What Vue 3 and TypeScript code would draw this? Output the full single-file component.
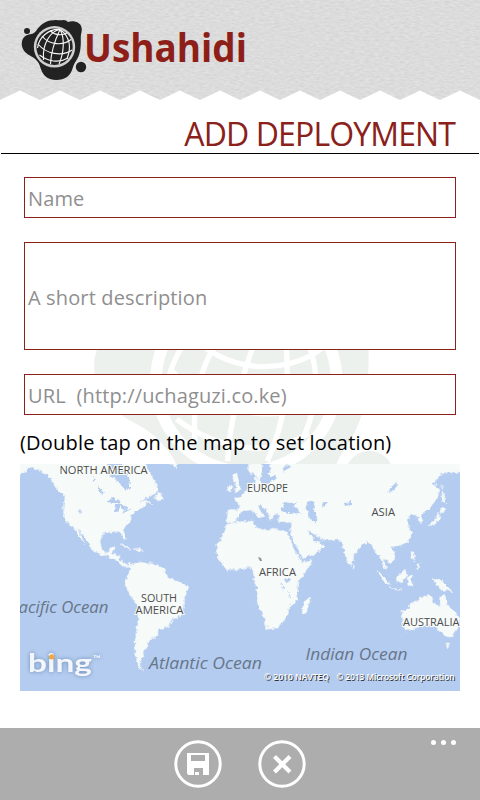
<script setup lang="ts">
import { ref } from 'vue'

interface MapLabel {
  text: string
  x: number
  y: number
  width: number
  kind: 'land' | 'sea'
}

const name = ref('')
const description = ref('')
const url = ref('')

const labels: MapLabel[] = [
  { text: 'NORTH AMERICA', x: 59.5, y: 474, width: 88, kind: 'land' },
  { text: 'EUROPE', x: 247, y: 492, width: 41, kind: 'land' },
  { text: 'ASIA', x: 371.5, y: 516, width: 23.5, kind: 'land' },
  { text: 'AFRICA', x: 259, y: 576, width: 37, kind: 'land' },
  { text: 'SOUTH', x: 141, y: 602, width: 36, kind: 'land' },
  { text: 'AMERICA', x: 135.5, y: 614, width: 48, kind: 'land' },
  { text: 'AUSTRALIA', x: 403, y: 626, width: 56.5, kind: 'land' },
  { text: 'Pacific Ocean', x: 9, y: 613, width: 99.5, kind: 'sea' },
  { text: 'Atlantic Ocean', x: 149, y: 669, width: 113, kind: 'sea' },
  { text: 'Indian Ocean', x: 305.5, y: 660, width: 102, kind: 'sea' },
]

const land: string[] = [
  // North and Central America
  'M18 462V476L24 472L30 467L37 469L45 473L50 478L54 484L58 491L65 497L63.500 507V516L69.500 525L75 529L80 538L85 544L77 528L83 535L90 545L92 551L102 554.500L111 557.500L117 561L122 566L128 567.500L132 564L126 564L120 560V555.500L112 554L116 546.500L111 548L107 553L102 550L100 541L104 533L115 531.500L121 532L124 540L126.500 538L123 530L128 523L132 515L137 510L144 507L147 502L153 505L148 500L140 503L146 498L153 494L159 490L157 485L152 477L147 467L146 462Z',
  // South America
  'M128 566.500L135 563L140 562L153 564L163 568L167 575L168 578L180 582L189 587L185 597L183 609L182 615L172 620L168 627L158 630L158 636L148 641V647L143 652L144 657L140 661L140 667L145 671L138 667L135 653V640L138 620V607L132 598L125 585L128 575L130 569Z',
  // Europe, Asia and the Middle East
  'M271 462L270 472L265 478L255 478L254 486L247 490L239 498L234 499L240 506L238 510L228 509L227 522L232 523L237 520L241 512L250 510L255 512L260 518L264 516L258 507L260 504L268 513L271 521L273 515L280 514L277 521L285 523L292 522L290 531L294 541L302 559L317 553L325 545L315 541L308 532L311 531L320 539L332 540L340 540L343 547L346 558L350 566L353 562L354 555L361 547L367 542L372 544L375 552L380 556L383 566L387 570L383 558L390 563L395 560L394 553L390 547L398 546L408 542L412 533L409 527L407 520L409 515L417 515L421 524L423 520L421 515L430 508L438 497L439 488L433 484L442 474L458 472H462V462Z',
  // Scandinavia
  'M248 462L249 473L255 474L259 481L263 473L261 462Z',
  // Africa
  'M227 524L242 521.500L254 521L255 527L268 531L272 528L282 530L287 532L295 552L302 562L312 560L310 566L303 575L298 582L297 600L289 607L288 616L278 628L267 629.500L264 618L257 602L258 592L254 580L253 570L249 567L237 570L227 570.500L217 556L216.500 546L223 535Z',
  // Australia
  'M402 611L408 609L411 603L418 601L421 597L430 595L434 603L440 606L441 596L444 594L448 605L456 612L460 619L458 628L452 637L446 637L440 631L436 627L427 625L416 628L406 631L403 625Z',
  // Islands
  'M233 475L237 472L238 480L241 489L235 493L236 486Z',
  'M228 487L232 485L231 491L227 491Z',
  'M303 605L309 597L310 601L306 613L302 614Z',
  'M442 484L444 496L446 504L442 500ZM441 508L446 509L441 513ZM439 513L440 520L434 525L427 526L434 521Z',
  'M376 569L386 579L391 587L384 582ZM391 588L402 590L395 590Z',
  'M396 578L405 569L407 575L402 583L397 581Z',
  'M407 577L413 575L411 580L413 585L408 586Z',
  'M433 579L442 581L449 588L453 592L443 590L436 585Z',
  'M411 552L414 552L415 561L411 558ZM416 565L420 563L419 569Z',
  'M445 643L450 643L448 648Z',
  'M353 564L355.500 568L353 569Z',
  'M119 544L126 546L131 549L124 547ZM133 549L143 550L138 552Z',
  'M154 499L159 491L164 499L160 501Z',
  'M170 463L178 463L176 468Z',
]

const water: string[] = [
  // Hudson Bay and inland lakes
  'M108 463L110 475L117 480L122 486L126 491L130 487L129 477L124 464L118 463Z',
  'M107 502L112 498L119 500L122 503L114 503Z',
  'M116 504L120 505L118 513L115 511ZM121 504L127 507L125 511L121 508Z',
  'M122 512L132 507L126 513Z',
  'M98 485L104 493L102 495L98 490ZM93 475L95 480L93 482Z',
  'M79 510L81 511L80 515Z',
  // Black Sea, Caspian Sea and Aral Sea
  'M281 511L284 502L291 503L297 502L294 506L300 513L291 514Z',
  'M307 503L313 501L316 506L313 509L317 515L316 522L310 520L309 513L306 507Z',
  'M322 504L326 501L328 503L323 508Z',
  // Baltic and White Sea
  'M263 466L267 464L268 474L272 477L276 475L275 480L264 484L260 480Z',
  'M282 468L289 465L291 467L284 471Z',
  // Central Asian lakes
  'M387 491L393 486L396 481L397 486L391 493Z',
  'M344 503L352 502L352 504.500L345 506Z',
  // African lakes
  'M285 579L289 577L290 581L286 583ZM281 582L284 588L283 590ZM288 591L291 598L289 598Z',
]
</script>

<template>
  <main class="page">
    <svg class="defs" width="0" height="0" aria-hidden="true">
      <symbol id="globe-mark" viewBox="20 18 68 64" overflow="visible">
        <path
          class="ink"
          d="M36 31C41 23 48 20 56 20Q60 20.500 62 20.200Q66 19.500 68 22C73 20 82 22 81.800 29.500C81.700 33 80.500 35 80.800 39C81 49 80 55 76 61C72 66 73 73 67 77C61 81 50 81 45 76C40 71 41 65 37 61C33 56 29 56 25 52C20.500 47 20.500 39 26 35.500C30 33.500 33 35 36 31Z"
        />
        <circle class="ink" cx="27" cy="31" r="3" />
        <circle class="ink" cx="81" cy="67" r="5.200" />
        <circle class="ring" cx="54.500" cy="46.800" r="20.700" />
        <circle class="ink" cx="54.500" cy="46.800" r="18.200" />
        <g class="wire">
          <path d="M60 29.500C51 31 42 43 43.500 60M60 29.500C56 38 51 52 50.500 64M60 29.500C65 38 64 53 59 64M60 29.500C71 37 71 49 67 58.500M60 29.500C49 28.500 39 37 37.500 48" />
          <path d="M50 30.500C54 35 62 36 67 33M42 36C49 45 63 46 71 39.500M38 44C46 54 62 57 72 50M39.500 55C48 61.500 59 63.500 68 58" />
        </g>
      </symbol>
    </svg>

    <svg class="watermark" viewBox="20 18 68 64" aria-hidden="true">
      <use href="#globe-mark" x="20" y="18" width="68" height="64" />
    </svg>

    <header class="banner">
      <svg width="480" height="101" viewBox="0 0 480 101" role="img" aria-label="Ushahidi">
        <defs>
          <filter id="paper" x="0" y="0" width="100%" height="100%" color-interpolation-filters="sRGB">
            <feTurbulence type="fractalNoise" baseFrequency="0.2 0.55" numOctaves="3" seed="7" />
            <feColorMatrix values="0.090 0 0 0 0.816  0.090 0 0 0 0.816  0.090 0 0 0 0.816  0 0 0 0 1" />
          </filter>
          <clipPath id="torn">
            <path d="M0 0H480V100L460 90.500L440 100L420 90.500L400 100L380 90.500L360 100L340 90.500L320 100L300 90.500L280 100L260 90.500L240 100L220 90.500L200 100L180 90.500L160 100L140 90.500L120 100L100 90.500L80 100L60 90.500L40 100L20 90.500L0 100Z" />
          </clipPath>
        </defs>
        <g clip-path="url(#torn)">
          <rect width="480" height="101" filter="url(#paper)" />
        </g>
        <use class="mark" href="#globe-mark" x="20" y="18" width="68" height="64" />
        <text class="wordmark" x="84" y="62" textLength="163" lengthAdjust="spacingAndGlyphs">Ushahidi</text>
      </svg>
    </header>

    <h1 class="title"><span>ADD DEPLOYMENT</span></h1>

    <form class="form" @submit.prevent>
      <input v-model="name" class="field" type="text" placeholder="Name" />
      <input v-model="description" class="field tall" type="text" placeholder="A short description" />
      <input v-model="url" class="field" type="text" placeholder="URL  (http://uchaguzi.co.ke)" />
    </form>

    <p class="hint">(Double tap on the map to set location)</p>

    <svg class="map" width="440" height="227" viewBox="20 464 440 227">
      <defs>
        <filter id="coast" x="-2%" y="-2%" width="104%" height="104%">
          <feTurbulence type="fractalNoise" baseFrequency="0.28" numOctaves="2" seed="4" />
          <feDisplacementMap in="SourceGraphic" scale="5" xChannelSelector="R" yChannelSelector="G" />
        </filter>
      </defs>
      <rect class="ocean" x="20" y="464" width="440" height="227" />
      <g filter="url(#coast)">
        <path v-for="d in land" :key="d" class="land" :d="d" />
        <path v-for="d in water" :key="d" class="lake" :d="d" />
      </g>
      <path class="chad" d="M258 557L261 558L262 561L260 561Z" />
      <text
        v-for="label in labels"
        :key="label.text"
        :class="['label', label.kind + '-label']"
        :x="label.x"
        :y="label.y"
        :textLength="label.width"
        lengthAdjust="spacingAndGlyphs"
      >{{ label.text }}</text>
      <g class="bing">
        <text x="28" y="672" textLength="64" lengthAdjust="spacingAndGlyphs">bing</text>
        <text class="tm" x="93" y="662" textLength="8" lengthAdjust="spacingAndGlyphs">™</text>
        <circle class="bing-dot" cx="51.800" cy="656.800" r="2.600" />
      </g>
      <text class="credit" x="264" y="679.500" textLength="65" lengthAdjust="spacingAndGlyphs">© 2010 NAVTEQ</text>
      <text class="credit" x="336.500" y="679.500" textLength="118" lengthAdjust="spacingAndGlyphs">© 2013 Microsoft Corporation</text>
    </svg>

    <footer class="appbar">
      <button class="action" type="button" aria-label="Save">
        <svg width="48" height="48" viewBox="0 0 48 48">
          <circle class="outline" cx="24" cy="24" r="22.200" />
          <path class="glyph" fill-rule="evenodd" d="M13 13H35V35H29V28H20V35H14.500L13 33.500ZM17 15V21H31V15Z" />
          <rect class="glyph" x="21" y="32" width="4" height="3" />
        </svg>
      </button>
      <button class="action" type="button" aria-label="Cancel">
        <svg width="48" height="48" viewBox="0 0 48 48">
          <circle class="outline" cx="24" cy="24" r="22.200" />
          <path class="cross" d="M16.500 16.500L32 32M32 16.500L16.500 32" />
        </svg>
      </button>
      <button class="more" type="button" aria-label="More">
        <span class="dot"></span><span class="dot"></span><span class="dot"></span>
      </button>
    </footer>
  </main>
</template>

<style>
body {
  margin: 0;
  background: #fff;
}
</style>

<style scoped>
.page {
  position: relative;
  display: flex;
  flex-direction: column;
  width: 480px;
  height: 800px;
  overflow: hidden;
  background: #fff;
  font-family: 'Open Sans', 'Noto Sans', sans-serif;
}

.defs {
  position: absolute;
}

.watermark {
  --ink: #edf1ee;
  --line: #fff;
  --grid: #fff;
  position: absolute;
  left: 86px;
  top: 247px;
  width: 316px;
  height: 298px;
}

.mark {
  --ink: #222;
  --line: #cfcfcf;
  --grid: #f4f4f4;
}

.ink {
  fill: var(--ink);
}

.ring {
  fill: var(--line);
}

.wire {
  fill: none;
  stroke: var(--grid);
  stroke-width: 1.15;
}

.banner {
  position: relative;
  height: 101px;
}

.banner svg {
  display: block;
}

.wordmark {
  fill: #8d1f18;
  font: 700 38.5px 'Open Sans', sans-serif;
}

.title {
  position: relative;
  box-sizing: border-box;
  display: flex;
  justify-content: flex-end;
  height: 53px;
  margin: 0 1px;
  padding-right: 24px;
  border-bottom: 1px solid #000;
  color: #8a211a;
  font-size: 32px;
  font-weight: 400;
  line-height: 65px;
  letter-spacing: -0.88px;
  white-space: nowrap;
}

.form {
  position: relative;
  display: flex;
  flex-direction: column;
  gap: 24px;
  margin: 23px 24px 0;
}

.field {
  box-sizing: border-box;
  width: 100%;
  height: 41px;
  padding: 2px 3px 0;
  border: 1px solid #8a211a;
  border-radius: 0;
  outline: none;
  background: #fff;
  color: #000;
  font: 400 20px 'Open Sans', 'Noto Sans', sans-serif;
  letter-spacing: 0.14px;
  white-space: pre;
}

.field.tall {
  height: 108px;
}

.field::placeholder {
  color: #8f8f8f;
  opacity: 1;
}

.hint {
  position: relative;
  height: 49px;
  margin: 0 0 0 20px;
  color: #000;
  font-size: 20px;
  line-height: 56px;
  letter-spacing: 0.19px;
  white-space: nowrap;
}

.map {
  position: relative;
  display: block;
  margin-left: 20px;
}

.ocean,
.lake {
  fill: #b4ccef;
}

.land {
  fill: #f6faf8;
  stroke: #e3ebf7;
  stroke-width: 0.6;
}

.chad {
  fill: #8b9194;
}

.label {
  font-family: 'Open Sans', sans-serif;
}

.land-label {
  fill: #4d4d4d;
  font-size: 10.5px;
  font-weight: 500;
  stroke: #f6faf8;
  stroke-width: 2px;
  paint-order: stroke;
}

.sea-label {
  fill: #67768a;
  font-size: 17px;
  font-style: italic;
  font-weight: 500;
}

.bing {
  fill: #f3f7fc;
  font-family: Lato, sans-serif;
  font-size: 25px;
  font-weight: 700;
  filter: drop-shadow(0 0 2px #6d8bb8);
}

.tm {
  font-size: 9px;
}

.bing-dot {
  fill: #efa83a;
}

.credit {
  fill: #fff;
  font: 600 9px 'Open Sans', sans-serif;
  text-shadow: 1px 1px 0 #333;
}

.appbar {
  position: relative;
  box-sizing: border-box;
  display: flex;
  justify-content: center;
  gap: 36px;
  height: 72px;
  margin-top: auto;
  padding-top: 12px;
  background: #adadad;
}

.action,
.more {
  padding: 0;
  border: 0;
  background: none;
}

.action {
  width: 48px;
  height: 48px;
}

.action svg {
  display: block;
}

.outline {
  fill: none;
  stroke: #fff;
  stroke-width: 3;
}

.glyph {
  fill: #fff;
}

.cross {
  fill: none;
  stroke: #fff;
  stroke-width: 4.2;
}

.more {
  position: absolute;
  top: 12px;
  right: 24px;
  display: flex;
  gap: 5px;
}

.dot {
  width: 5px;
  height: 5px;
  border-radius: 50%;
  background: #fff;
}
</style>
